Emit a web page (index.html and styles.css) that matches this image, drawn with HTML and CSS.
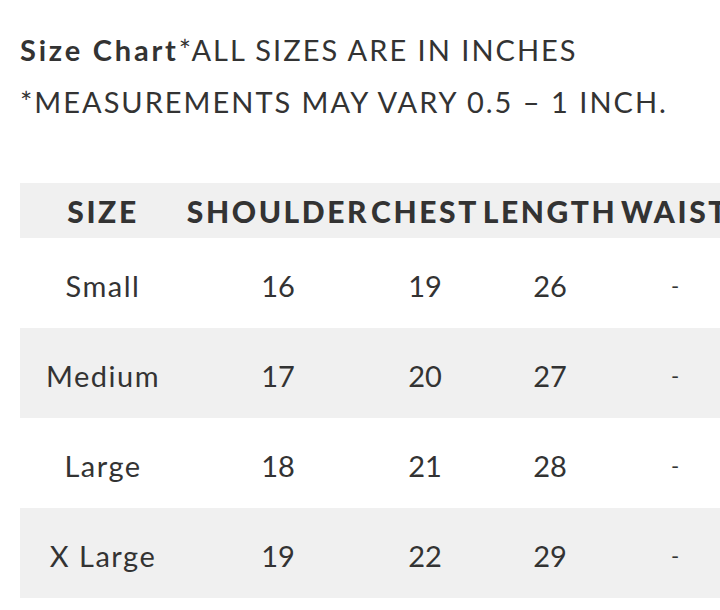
FILE: index.html
```html
<!DOCTYPE html>
<html>
<head>
<meta charset="utf-8">
<link rel="stylesheet" href="styles.css">
</head>
<body>
<div class="page">
  <div class="intro">
    <p class="line"><strong class="title">Size Chart</strong>*ALL SIZES ARE IN INCHES</p>
    <p class="line">*MEASUREMENTS MAY VARY 0.5 – 1 INCH.</p>
  </div>
  <div class="chart">
    <div class="row head">
      <div class="cell">SIZE</div>
      <div class="cell">SHOULDER</div>
      <div class="cell">CHEST</div>
      <div class="cell">LENGTH</div>
      <div class="cell">WAIST</div>
    </div>
    <div class="row">
      <div class="cell name">Small</div>
      <div class="cell">16</div>
      <div class="cell">19</div>
      <div class="cell">26</div>
      <div class="cell dash">-</div>
    </div>
    <div class="row alt">
      <div class="cell name">Medium</div>
      <div class="cell">17</div>
      <div class="cell">20</div>
      <div class="cell">27</div>
      <div class="cell dash">-</div>
    </div>
    <div class="row">
      <div class="cell name">Large</div>
      <div class="cell">18</div>
      <div class="cell">21</div>
      <div class="cell">28</div>
      <div class="cell dash">-</div>
    </div>
    <div class="row alt">
      <div class="cell name">X Large</div>
      <div class="cell">19</div>
      <div class="cell">22</div>
      <div class="cell">29</div>
      <div class="cell dash">-</div>
    </div>
  </div>
</div>
</body>
</html>
```

FILE: styles.css
```css
html, body {
  margin: 0;
  padding: 0;
  background: #ffffff;
  overflow: hidden;
}

.page {
  width: 720px;
  height: 610px;
  overflow: hidden;
  padding-left: 20px;
  box-sizing: border-box;
  font-family: "Lato", "Open Sans", sans-serif;
  color: #333333;
}

.intro {
  padding-top: 24px;
}

.line {
  margin: 0;
  font-size: 29px;
  line-height: 52px;
  font-weight: 400;
  white-space: nowrap;
  letter-spacing: 2px;
}

.title {
  font-weight: 700;
  letter-spacing: 2.8px;
}

.chart {
  margin-top: 55px;
  width: 710px;
}

.row {
  display: grid;
  grid-template-columns: 166px 184px 110px 140px 110px;
  height: 90px;
  align-items: center;
}

.row.head {
  height: 55px;
  background: #f0f0f0;
}

.row.alt {
  background: #f0f0f0;
}

.cell {
  white-space: nowrap;
  font-size: 29px;
  padding-top: 4px;
  display: flex;
  justify-content: center;
}

.cell.name {
  letter-spacing: 1.5px;
}

.head .cell {
  font-weight: 900;
  font-size: 30px;
  letter-spacing: 2.6px;
  padding-top: 0;
}

.dash {
  font-size: 22px;
}
```
